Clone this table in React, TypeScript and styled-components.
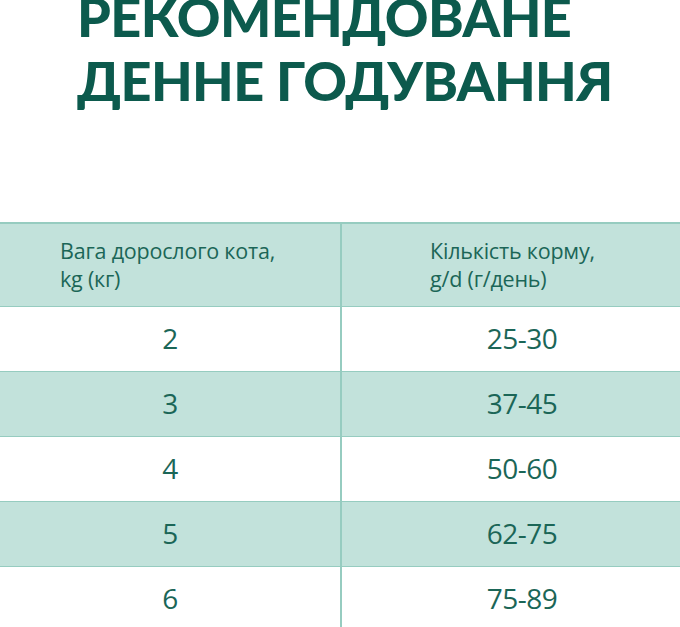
import React, { FC } from 'react';
import styled, { createGlobalStyle } from 'styled-components';

const GlobalStyle = createGlobalStyle`
  html, body {
    margin: 0;
    padding: 0;
    background: #ffffff;
    overflow: hidden;
  }
  body {
    font-family: 'Open Sans', 'Noto Sans', sans-serif;
  }
`;

type Row = { weight: string; amount: string };

const rows: Row[] = [
  { weight: '2', amount: '25-30' },
  { weight: '3', amount: '37-45' },
  { weight: '4', amount: '50-60' },
  { weight: '5', amount: '62-75' },
  { weight: '6', amount: '75-89' },
];

const App: FC = () => {
  return (
    <Page>
      <GlobalStyle />
      <Title>
        РЕКОМЕНДОВАНЕ
        <br />
        ДЕННЕ ГОДУВАННЯ
      </Title>
      <Table>
        <HeadCell first>
          Вага дорослого кота,
          <br />
          kg (кг)
        </HeadCell>
        <HeadCell>
          Кількість корму,
          <br />
          g/d (г/день)
        </HeadCell>
        {rows.map((row, i) => (
          <React.Fragment key={row.weight}>
            <Cell first striped={i % 2 === 1}>
              {row.weight}
            </Cell>
            <Cell striped={i % 2 === 1}>{row.amount}</Cell>
          </React.Fragment>
        ))}
      </Table>
    </Page>
  );
};

export default App;

const TEXT = '#1b6657';
const HEAD_BG = '#c2e2db';
const LINE = '#96ccc0';

const Page = styled.div`
  width: 702px;
  display: flex;
  flex-direction: column;
`;

const Title = styled.h1`
  margin: -15px 0 0 0;
  padding-left: 77px;
  font-family: 'Lato', 'Open Sans', sans-serif;
  font-weight: 900;
  font-size: 54px;
  line-height: 64px;
  letter-spacing: -0.6px;
  color: #0c5a4d;
`;

const Table = styled.div`
  margin-top: 109px;
  display: grid;
  grid-template-columns: 342px 1fr;
  border-top: 2px solid ${LINE};
`;

const HeadCell = styled.div<{ first?: boolean }>`
  height: 83px;
  box-sizing: border-box;
  background: ${HEAD_BG};
  border-bottom: 1px solid ${LINE};
  border-right: ${({ first }) => (first ? `2px solid ${LINE}` : 'none')};
  padding: 13px 0 0 ${({ first }) => (first ? '60px' : '88px')};
  font-size: 21.5px;
  line-height: 28px;
  color: ${TEXT};
  letter-spacing: -0.2px;
`;

const Cell = styled.div<{ first?: boolean; striped?: boolean }>`
  height: 65px;
  box-sizing: border-box;
  display: flex;
  align-items: center;
  justify-content: center;
  background: ${({ striped }) => (striped ? HEAD_BG : '#ffffff')};
  border-bottom: 1px solid ${LINE};
  border-right: ${({ first }) => (first ? `2px solid ${LINE}` : 'none')};
  font-size: 28px;
  letter-spacing: -0.5px;
  color: ${TEXT};
  padding-bottom: 2px;
`;
